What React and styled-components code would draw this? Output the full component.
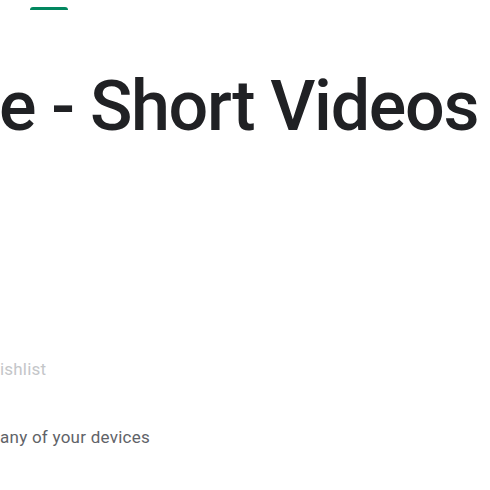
import React from 'react';
import styled, { createGlobalStyle } from 'styled-components';

const GlobalStyle = createGlobalStyle`
  html, body {
    margin: 0;
    padding: 0;
    background: #fff;
    font-family: Roboto, "Liberation Sans", Arial, sans-serif;
  }
`;

const Page = styled.div`
  width: 490px;
  height: 490px;
  overflow: hidden;
  display: flex;
  flex-direction: column;
  align-items: flex-start;
`;

const TabIndicator = styled.div`
  margin: 7px 0 0 30px;
  width: 38px;
  height: 3px;
  border-radius: 3px 3px 0 0;
  background: #01875f;
`;

const Title = styled.h1`
  margin: 54px 0 0 -1px;
  font-size: 70px;
  line-height: 84px;
  font-weight: 500;
  color: #202124;
  white-space: nowrap;
  letter-spacing: -1.3px;
`;

const Wishlist = styled.span`
  margin-top: 211px;
  font-size: 17px;
  line-height: 20px;
  color: #c4c6c9;
  letter-spacing: 0.2px;
`;

const DevicesNote = styled.p`
  margin: 48px 0 0;
  font-size: 17px;
  line-height: 20px;
  color: #5f6368;
  letter-spacing: 0.25px;
`;

export default function App() {
  return (
    <>
      <GlobalStyle />
      <Page>
        <TabIndicator />
        <Title>e - Short Videos</Title>
        <Wishlist>ishlist</Wishlist>
        <DevicesNote>any of your devices</DevicesNote>
      </Page>
    </>
  );
}
